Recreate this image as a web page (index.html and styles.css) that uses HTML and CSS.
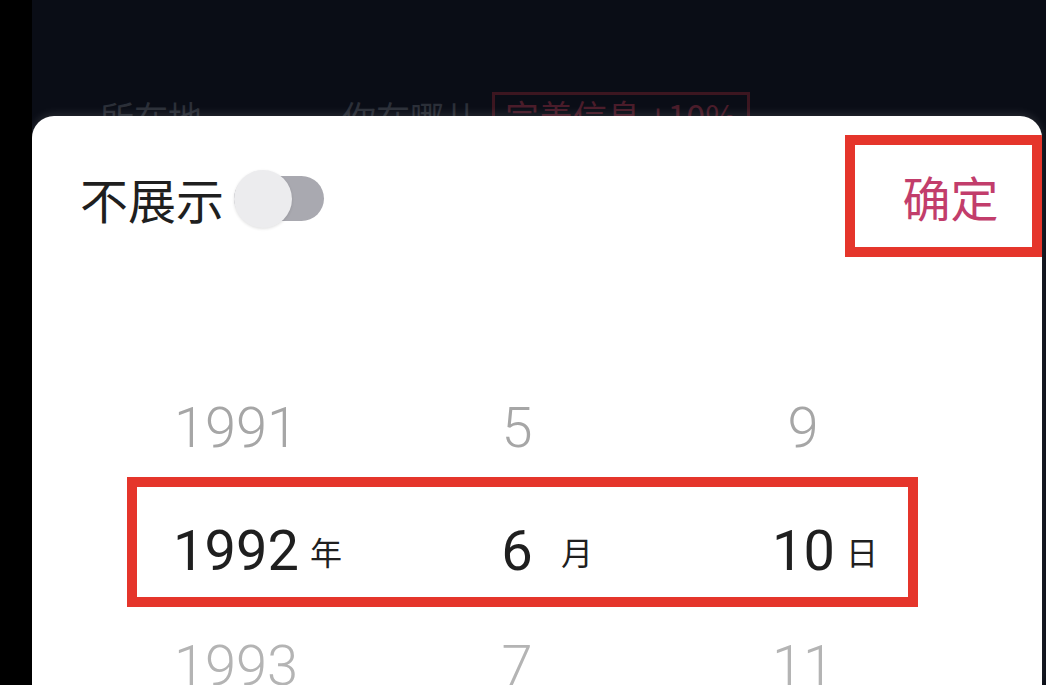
FILE: index.html
```html
<!DOCTYPE html>
<html lang="zh-CN">
<head>
  <meta charset="UTF-8">
  <meta name="viewport" content="width=device-width, initial-scale=1.0">
  <title>选择生日</title>
  <link rel="stylesheet" href="styles.css">
</head>
<body>
  <div class="screen">
    <div class="backdrop">
      <div class="backdrop-row">
        <span class="field-label">所在地</span>
        <span class="field-value">你在哪儿</span>
        <span class="field-tag">完善信息 +10%</span>
      </div>
    </div>

    <div class="sheet">
      <div class="sheet-head">
        <div class="privacy">
          <span class="privacy-label">不展示</span>
          <span class="toggle"><span class="knob"></span></span>
        </div>
        <button class="confirm">确定</button>
      </div>

      <div class="picker">
        <div class="picker-row dim">
          <div class="col col-year"><span class="num">1991</span></div>
          <div class="col col-month"><span class="num">5</span></div>
          <div class="col col-day"><span class="num">9</span></div>
        </div>
        <div class="picker-row selected">
          <div class="col col-year"><span class="num">1992</span><span class="unit">年</span></div>
          <div class="col col-month"><span class="num">6</span><span class="unit">月</span></div>
          <div class="col col-day"><span class="num">10</span><span class="unit">日</span></div>
        </div>
        <div class="picker-row dim">
          <div class="col col-year"><span class="num">1993</span></div>
          <div class="col col-month"><span class="num">7</span></div>
          <div class="col col-day"><span class="num">11</span></div>
        </div>
      </div>
    </div>
  </div>
</body>
</html>
```

FILE: styles.css
```css
:root {
  --night: #0a0d16;
  --sheet: #ffffff;
  --ink: #1f1f1f;
  --muted: #a6a6a6;
  --accent: #c23d6b;
  --mark: #e5352b;
}
* { box-sizing: border-box; }
body {
  margin: 0;
  background: #000;
  height: 100vh;
  overflow: hidden;
  font-family: Roboto, "Noto Sans CJK SC", sans-serif;
}
.screen {
  margin-left: 32px;
  height: 100%;
  overflow: hidden;
  background: var(--night);
  display: flex;
  flex-direction: column;
}

/* dimmed page behind the sheet */
.backdrop {
  height: 116px;
  flex-shrink: 0;
  overflow: hidden;
  padding: 100px 0 0 68px;
}
.backdrop-row {
  display: flex;
  align-items: flex-start;
  font-family: "Noto Sans CJK SC", sans-serif;
  font-size: 34px;
  line-height: 1;
  color: #2b2f38;
}
.field-value { margin-left: 140px; }
.field-tag {
  margin-left: 14px;
  padding: 4px 10px;
  margin-top: -8px;
  border: 3px solid #3c1620;
  color: #4a1c2a;
}

/* bottom sheet */
.sheet {
  flex: 1;
  min-height: 0;
  overflow: hidden;
  margin-right: 4px;
  background: var(--sheet);
  border-radius: 22px 22px 0 0;
  box-shadow: 0 -2px 10px rgba(255, 255, 255, 0.12);
}
.sheet-head {
  display: flex;
  justify-content: space-between;
  align-items: center;
  padding: 19px 0 0 48px;
}
.privacy {
  display: flex;
  align-items: center;
  margin-top: 4px;
}
.privacy-label {
  font-family: "Noto Sans CJK SC", sans-serif;
  font-size: 48px;
  line-height: 1;
  color: var(--ink);
}
.toggle {
  position: relative;
  width: 90px;
  height: 45px;
  margin-left: 10px;
  border-radius: 23px;
  background: #a9a9b0;
}
.knob {
  position: absolute;
  left: 0;
  top: -6px;
  width: 58px;
  height: 58px;
  border-radius: 50%;
  background: #ececee;
  box-shadow: 0 1px 3px rgba(0, 0, 0, 0.12);
}
.confirm {
  width: 197px;
  height: 122px;
  padding: 0 0 0 14px;
  border: 10px solid var(--mark);
  background: none;
  font-family: "Noto Sans CJK SC", sans-serif;
  font-size: 48px;
  color: var(--accent);
}

/* date wheel */
.picker { padding-top: 122px; }
.picker-row {
  display: flex;
  align-items: center;
  width: 791px;
  margin-left: 95px;
  padding-left: 35px;
  border: 10px solid transparent;
  font-size: 56px;
  font-weight: 300;
  color: var(--muted);
}
.picker-row.dim:first-child { height: 98px; border-width: 0 10px; }
.picker-row.dim:last-child { height: 118px; border-width: 0 10px; color: #b4b4b4; }
.picker-row.selected {
  height: 130px;
  padding-top: 18px;
  border-color: var(--mark);
  font-weight: 400;
  color: var(--ink);
}
.col {
  display: flex;
  align-items: center;
}
.col-year { width: 325px; }
.col-year .num { width: 128px; text-align: center; }
.col-month { width: 275px; }
.col-month .num { width: 40px; text-align: center; }
.col-day .num { width: 62px; text-align: center; }
.unit {
  font-family: "Noto Sans CJK SC", sans-serif;
  font-size: 32px;
  color: var(--ink);
  margin-left: 10px;
}
.col-month .unit { margin-left: 24px; }
.col-day .unit { margin-left: 12px; }
```
